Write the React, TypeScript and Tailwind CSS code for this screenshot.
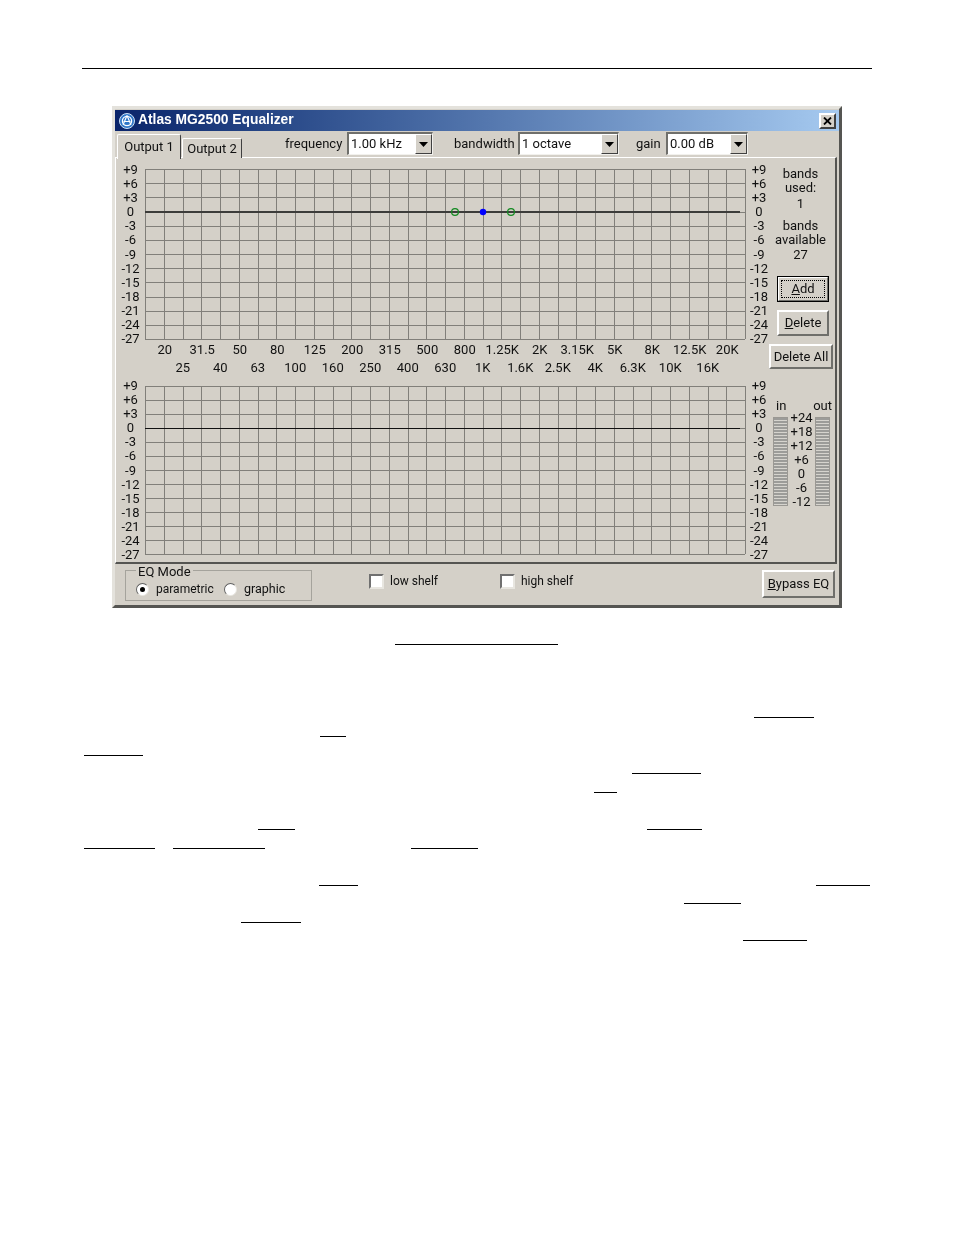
import React from 'react'

const dbLabels = ['+9', '+6', '+3', '0', '-3', '-6', '-9', '-12', '-15', '-18', '-21', '-24', '-27']
const freqTop = ['20', '31.5', '50', '80', '125', '200', '315', '500', '800', '1.25K', '2K', '3.15K', '5K', '8K', '12.5K', '20K']
const freqBottom = ['25', '40', '63', '100', '160', '250', '400', '630', '1K', '1.6K', '2.5K', '4K', '6.3K', '10K', '16K']
const meterScale = ['+24', '+18', '+12', '+6', '0', '-6', '-12']

// stray underlines left over below the dialog: y, then [x1, x2] pairs
const rules: { y: number; segs: [number, number][] }[] = [
  { y: 644, segs: [[395, 558]] },
  { y: 717, segs: [[754, 814]] },
  { y: 736, segs: [[320, 346]] },
  { y: 755, segs: [[84, 143]] },
  { y: 773, segs: [[632, 701]] },
  { y: 792, segs: [[594, 617]] },
  { y: 829, segs: [[258, 295], [647, 702]] },
  { y: 848, segs: [[84, 155], [173, 265], [411, 478]] },
  { y: 885, segs: [[319, 358], [816, 870]] },
  { y: 903, segs: [[684, 741]] },
  { y: 922, segs: [[241, 301]] },
  { y: 940, segs: [[743, 807]] },
]

function Axis({ right, nudge }: { right?: boolean; nudge?: boolean }) {
  return (
    <div className={`${right ? 'w-[23px] pl-[3px]' : 'w-[29px]'} ${nudge ? 'mt-px' : ''} shrink-0 text-center`}>
      {dbLabels.map(l => (
        <div key={l} className="h-[14.1px] leading-[14.1px] whitespace-nowrap">{l}</div>
      ))}
    </div>
  )
}

function Grid({ h, thick, points }: { h: number; thick?: boolean; points?: boolean }) {
  const zero = Math.round(h / 4)
  return (
    <svg width="601" height={h + 1} className="block mt-[7px] shrink-0" shapeRendering="crispEdges">
      {Array.from({ length: 33 }, (_, i) => (
        <line key={i} x1={Math.round(i * 18.75) + 0.5} x2={Math.round(i * 18.75) + 0.5} y1="0" y2={h} stroke="#817f7a" />
      ))}
      {Array.from({ length: 13 }, (_, i) => (
        <line key={i} x1="0" x2="600" y1={Math.round((i * h) / 12) + 0.5} y2={Math.round((i * h) / 12) + 0.5} stroke="#817f7a" />
      ))}
      <line x1="0" x2="595" y1={zero} y2={zero} stroke={thick ? '#3c3c3a' : '#101010'} strokeWidth={thick ? 2 : 1} />
      {points && (
        <g shapeRendering="auto">
          <circle cx="310" cy={zero} r="3.4" fill="none" stroke="#128a20" strokeWidth="1.2" />
          <circle cx="366" cy={zero} r="3.4" fill="none" stroke="#128a20" strokeWidth="1.2" />
          <circle cx="338" cy={zero} r="3.2" fill="#0000ff" />
        </g>
      )}
    </svg>
  )
}

function Chart({ h, thick, points, nudge }: { h: number; thick?: boolean; points?: boolean; nudge?: boolean }) {
  return (
    <div className="flex" style={{ height: h + 7 }}>
      <Axis nudge={nudge} />
      <Grid h={h} thick={thick} points={points} />
      <Axis right nudge={nudge} />
    </div>
  )
}

function FreqRow({ items, offset }: { items: string[]; offset: string }) {
  return (
    <div className={`flex h-[18px] leading-[18px] ${offset}`}>
      {items.map(f => (
        <div key={f} className="w-[37.5px] shrink-0 text-center whitespace-nowrap">{f}</div>
      ))}
    </div>
  )
}

function Select({ label, value, labelW, width, gap }: { label: string; value: string; labelW: string; width: string; gap: string }) {
  return (
    <div className={`flex items-center ${gap}`}>
      <span className={`${labelW} whitespace-nowrap`}>{label}</span>
      <div className={`${width} h-[23px] ml-[6px] flex bg-white border border-t-2 border-l-2 border-t-[#6f6f6b] border-l-[#6f6f6b] border-r-[#f2f1ed] border-b-[#f2f1ed]`}>
        <span className="flex-1 pl-[2px] leading-[20px] whitespace-nowrap">{value}</span>
        <div className="w-[17px] flex items-center justify-center bg-[#d4d0c8] border border-t-white border-l-white border-r-[#404040] border-b-[#404040]">
          <svg width="9" height="5" viewBox="0 0 9 5"><path d="M0 0h9L4.5 5z" fill="#000" /></svg>
        </div>
      </div>
    </div>
  )
}

const bevel = 'flex items-center justify-center bg-[#d4d0c8] border-2 border-t-white border-l-white border-r-[#6f6f6b] border-b-[#6f6f6b] whitespace-nowrap'

function Meter() {
  return (
    <div className="w-[15px] h-[89px] shrink-0 border border-[#9a9893] bg-[repeating-linear-gradient(to_bottom,#9c9c99_0px,#9c9c99_2px,#d6d4ce_2px,#d6d4ce_3px)]" />
  )
}

function Radio({ on }: { on?: boolean }) {
  return (
    <span className="w-[13px] h-[13px] rounded-full bg-white border border-t-[#606060] border-l-[#606060] border-r-[#e8e6e0] border-b-[#e8e6e0] flex items-center justify-center shrink-0">
      {on && <span className="w-[5px] h-[5px] rounded-full bg-black" />}
    </span>
  )
}

function Check({ label }: { label: string }) {
  return (
    <div className="flex items-center gap-[6px] w-[131px]">
      <span className="w-[15px] h-[15px] bg-white border-2 border-t-[#707070] border-l-[#707070] border-r-[#e8e6e0] border-b-[#e8e6e0] shrink-0" />
      <span className="whitespace-nowrap text-[12px]">{label}</span>
    </div>
  )
}

export default function App() {
  return (
    <div className="w-[954px] h-[1235px] bg-white overflow-hidden font-['Roboto',Arial,sans-serif] text-[13px] text-[#111111]">
      <div className="pt-[68px]">
        <div className="ml-[82px] w-[790px] h-px bg-black" />
      </div>

      {/* Dialog */}
      <div className="ml-[112px] mt-[37px] w-[730px] h-[502px] flex flex-col bg-[#d4d0c8] border-[3px] border-t-[#e4e2dc] border-l-[#e4e2dc] border-r-[#555552] border-b-[#555552] blur-[0.35px]">
        {/* Title bar */}
        <div className="h-[21px] mt-px flex items-center pl-[4px] pr-[3px] bg-gradient-to-r from-[#0a246a] to-[#a6caf0] shrink-0">
          <svg width="16" height="16" viewBox="0 0 16 16" className="shrink-0">
            <circle cx="8" cy="8" r="7.5" fill="#2f77c8" stroke="#cfe2f5" />
            <circle cx="8" cy="8" r="4.6" fill="none" stroke="#fff" strokeWidth="1.3" />
            <path d="M8 2.5 4 12M8 2.5l4 9.5M4.5 8.5h7" stroke="#fff" strokeWidth="1.1" fill="none" />
          </svg>
          <span className="ml-[3px] text-white font-bold font-['Liberation_Sans',Arial,sans-serif] text-[13.8px] whitespace-nowrap">Atlas MG2500 Equalizer</span>
          <div className={`ml-auto w-[17px] h-[16px] ${bevel} border-r-[#404040] border-b-[#404040]`}>
            <svg width="9" height="8" viewBox="0 0 9 8"><path d="M1 0.5 8 7.5M8 0.5 1 7.5" stroke="#000" strokeWidth="1.8" /></svg>
          </div>
        </div>

        {/* Tabs and selects */}
        <div className="h-[26px] flex items-start shrink-0 pl-[2px] relative z-10">
          <div className="w-[64px] h-[25px] mt-[3px] flex items-center justify-center bg-[#d4d0c8] border border-b-0 border-t-white border-l-white border-r-[#404040] rounded-t-[2px] whitespace-nowrap">Output 1</div>
          <div className="w-[60px] h-[20px] mt-[7px] ml-px flex items-center justify-center bg-[#d4d0c8] border border-b-0 border-t-white border-l-white border-r-[#404040] rounded-t-[2px] whitespace-nowrap">Output 2</div>
          <div className="flex mt-px">
            <Select label="frequency" value="1.00 kHz" labelW="w-[56px]" width="w-[86px]" gap="ml-[43px]" />
            <Select label="bandwidth" value="1 octave" labelW="w-[58px]" width="w-[101px]" gap="ml-[21px]" />
            <Select label="gain" value="0.00 dB" labelW="w-[24px]" width="w-[82px]" gap="ml-[17px]" />
          </div>
        </div>

        {/* Panel with the two graphs */}
        <div className="h-[407px] mr-[2px] flex shrink-0 border border-t-white border-l-white border-r-2 border-b-2 border-r-[#555552] border-b-[#555552]">
          <div className="w-[653px] pt-[4px] shrink-0">
            <Chart h={170} thick points nudge />
            <div className="mt-[2px] h-[38px]">
              <FreqRow items={freqTop} offset="ml-[30px]" />
              <FreqRow items={freqBottom} offset="ml-[48px]" />
            </div>
            <Chart h={168} />
          </div>

          <div className="flex-1 text-center">
            <div className="pt-[9px] pr-[3px] leading-[14px]">
              <div>bands</div>
              <div>used:</div>
              <div className="mt-[2px]">1</div>
              <div className="mt-[8px]">bands</div>
              <div>available</div>
              <div className="mt-px">27</div>
            </div>
            <div className="mt-[14px] ml-[8px] w-[52px] h-[26px] p-px bg-black">
              <div className="h-full p-[2px] bg-[#d4d0c8] border border-t-white border-l-white border-r-[#6f6f6b] border-b-[#6f6f6b]">
                <div className="h-full flex items-center justify-center border border-dotted border-black"><span><u>A</u>dd</span></div>
              </div>
            </div>
            <div className={`mt-[8px] ml-[8px] w-[52px] h-[26px] ${bevel}`}><span><u>D</u>elete</span></div>
            <div className={`mt-[8px] w-[64px] h-[25px] ${bevel}`}>Delete All</div>
            <div className="mt-[30px] flex justify-between pl-[7px] pr-[3px] leading-[14px]">
              <span>in</span>
              <span>out</span>
            </div>
            <div className="mt-[4px] ml-[4px] flex">
              <Meter />
              <div className="w-[27px] -mt-[6px] shrink-0">
                {meterScale.map(m => <div key={m} className="h-[14px] leading-[14px]">{m}</div>)}
              </div>
              <Meter />
            </div>
          </div>
        </div>

        {/* Bottom bar */}
        <div className="flex-1 flex items-start pl-[10px]">
          <div className="relative mt-[6px] w-[187px] h-[31px] border border-[#a5a39c] shrink-0 flex items-center pl-[10px] pt-[7px]">
            <span className="absolute left-[10px] -top-[6px] px-[2px] bg-[#d4d0c8] leading-[14px] whitespace-nowrap">EQ Mode</span>
            <Radio on />
            <span className="ml-[7px] w-[68px] whitespace-nowrap text-[12px]">parametric</span>
            <Radio />
            <span className="ml-[7px] whitespace-nowrap text-[12.5px]">graphic</span>
          </div>
          <div className="flex ml-[57px] mt-[8px]">
            <Check label="low shelf" />
            <Check label="high shelf" />
          </div>
          <div className={`ml-auto mr-[4px] mt-[6px] w-[73px] h-[28px] ${bevel}`}><span><u>B</u>ypass EQ</span></div>
        </div>
      </div>

      {/* Underlines */}
      <div className="flex flex-col">
        {rules.map((r, i) => (
          <div key={r.y} className="flex h-px bg-transparent" style={{ marginTop: r.y - (i ? rules[i - 1].y + 1 : 608) }}>
            {r.segs.map(([a, b], j) => (
              <div key={a} className="h-px bg-black shrink-0" style={{ width: b - a, marginLeft: a - (j ? r.segs[j - 1][1] : 0) }} />
            ))}
          </div>
        ))}
      </div>
    </div>
  )
}
